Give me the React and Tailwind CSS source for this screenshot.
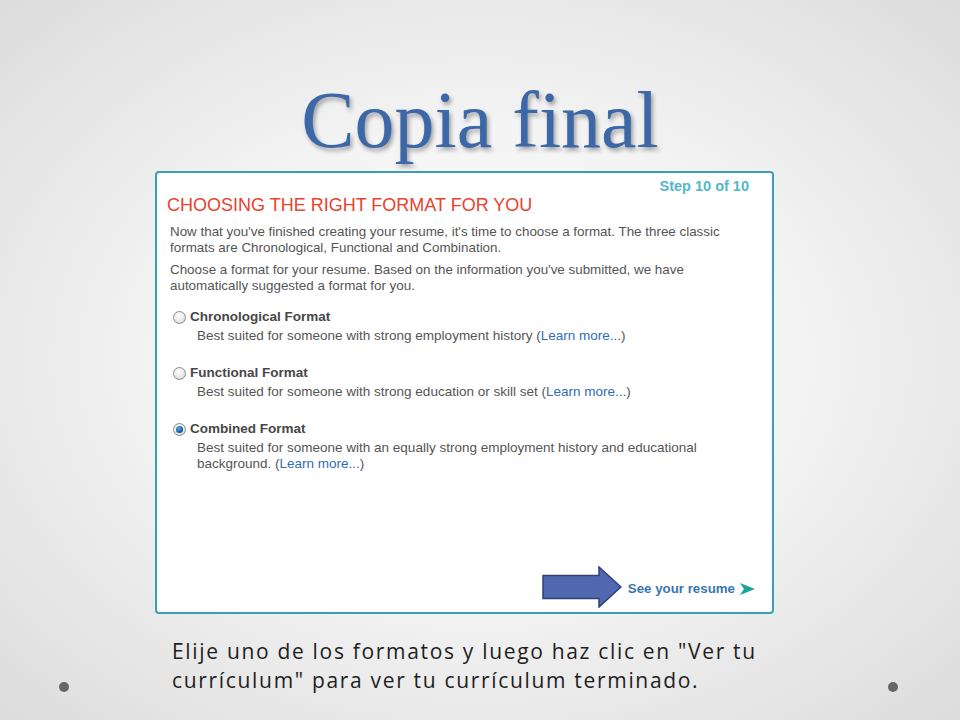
import React from "react";

const FORMATS = [
  {
    name: "Chronological Format",
    desc: "Best suited for someone with strong employment history",
    checked: false,
  },
  {
    name: "Functional Format",
    desc: "Best suited for someone with strong education or skill set",
    checked: false,
  },
  {
    name: "Combined Format",
    desc: "Best suited for someone with an equally strong employment history and educational background.",
    checked: true,
  },
];

const Radio = ({ checked }) => (
  <span className="w-[13px] h-[13px] rounded-full border border-[#8c8c8c] bg-[radial-gradient(circle_at_40%_35%,#ffffff_0%,#e6e6e6_60%,#c8c8c8_100%)] flex items-center justify-center shrink-0">
    {checked && (
      <span className="w-[7px] h-[7px] rounded-full bg-[radial-gradient(circle_at_40%_35%,#5fb0f0_0%,#1560a8_55%,#0b2f60_100%)]" />
    )}
  </span>
);

const BigArrow = () => (
  <svg width="80" height="42" viewBox="0 0 80 42" className="shrink-0">
    <polygon
      points="1,9.5 57,9.5 57,1 79,21 57,41 57,32.5 1,32.5"
      fill="#5068b0"
      stroke="#2e3f7a"
      strokeWidth="1.5"
      strokeLinejoin="miter"
    />
  </svg>
);

export default function App() {
  return (
    <div className="w-[960px] h-[720px] overflow-hidden flex flex-col bg-[radial-gradient(ellipse_at_center,#ffffff_0%,#f4f4f4_45%,#dcdcdc_100%)] font-['Liberation_Sans',Arial,sans-serif]">
      {/* Title */}
      <h1 className="pt-[80px] h-[160px] text-center leading-none text-[80px] text-[#3d68a8] font-['Liberation_Serif','Times_New_Roman',serif] [text-shadow:2px_3px_4px_rgba(0,0,0,0.35)]">
        Copia final
      </h1>

      {/* Screenshot card */}
      <div className="mt-[11px] ml-[155px] w-[619px] h-[443px] bg-white border-2 border-[#3a9fb2] rounded-[4px] flex flex-col">
        <div className="pt-[5px] pr-[23px] text-right text-[14.5px] leading-[17px] font-bold text-[#52b8c9]">
          Step 10 of 10
        </div>
        <h2 className="pl-[10px] text-[18px] leading-[20px] text-[#e8432e]">
          CHOOSING THE RIGHT FORMAT FOR YOU
        </h2>
        <div className="pl-[13px] pr-[31px] text-[13.4px] leading-[16px] text-[#555555]">
          <p className="mt-[9px]">
            Now that you've finished creating your resume, it's time to choose a format. The three classic formats are Chronological, Functional and Combination.
          </p>
          <p className="mt-[6px]">
            Choose a format for your resume. Based on the information you've submitted, we have automatically suggested a format for you.
          </p>
        </div>

        <div className="mt-[13px] pl-[16px] pr-[31px] flex flex-col gap-[19px]">
          {FORMATS.map((f) => (
            <div key={f.name}>
              <label className="flex items-center gap-[4px] text-[13.5px] leading-[20px] font-bold text-[#474747]">
                <Radio checked={f.checked} />
                {f.name}
              </label>
              <p className="mt-[1px] pl-[24px] text-[13.5px] leading-[16px] text-[#555555]">
                {f.desc} (<span className="text-[#2f6db5]">Learn more...</span>)
              </p>
            </div>
          ))}
        </div>

        <div className="mt-auto mb-[4px] pr-[17px] flex items-center justify-end">
          <BigArrow />
          <span className="ml-[6px] mt-[3px] text-[13.3px] font-bold text-[#3a76ae]">
            See your resume
          </span>
          <svg width="15" height="12" viewBox="0 0 15 12" className="ml-[5px] mt-[3px]">
            <polygon points="0,0 15,6 0,12 4,6" fill="#1aa39a" />
          </svg>
        </div>
      </div>

      {/* Footer */}
      <div className="mt-[23px] pl-[59px] pr-[62px] flex">
        <span className="self-end mb-[3px] w-[10px] h-[10px] rounded-full bg-[#666666]" />
        <p className="ml-[103px] w-[620px] text-[21px] leading-[29px] tracking-[0.08em] text-[#1e1e1e] font-['Open_Sans','Noto_Sans',sans-serif]">
          Elije uno de los formatos y luego haz clic en "Ver tu currículum" para ver tu currículum terminado.
        </p>
        <span className="ml-auto self-end mb-[3px] w-[10px] h-[10px] rounded-full bg-[#666666]" />
      </div>
    </div>
  );
}
